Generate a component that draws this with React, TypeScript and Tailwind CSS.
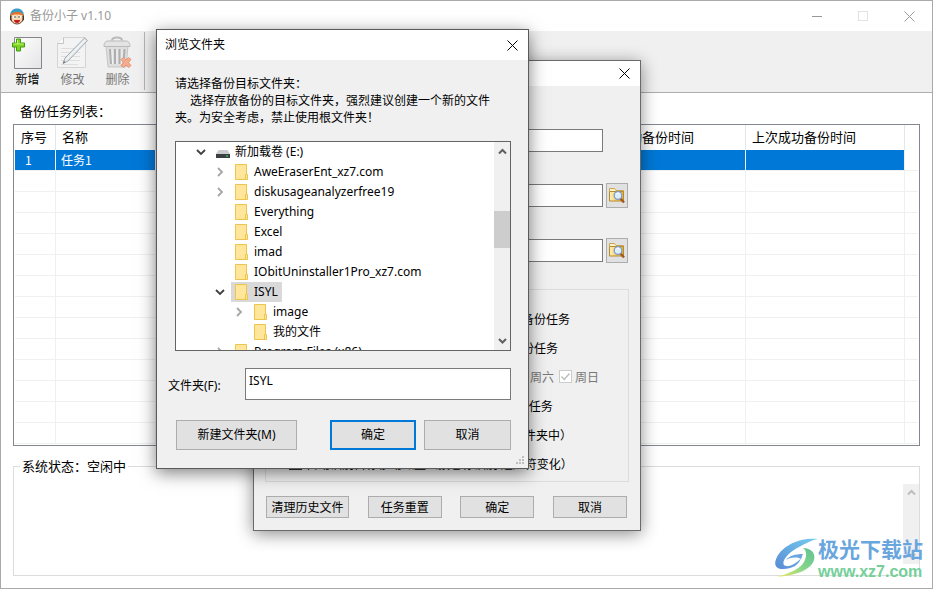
import { useState } from 'react'
import type { ReactNode } from 'react'

interface TreeNode {
  name: string
  level: number
  kind: 'drive' | 'folder'
  state?: 'open' | 'closed'
}

const TREE: TreeNode[] = [
  { name: '新加载卷 (E:)', level: 0, kind: 'drive', state: 'open' },
  { name: 'AweEraserEnt_xz7.com', level: 1, kind: 'folder', state: 'closed' },
  { name: 'diskusageanalyzerfree19', level: 1, kind: 'folder', state: 'closed' },
  { name: 'Everything', level: 1, kind: 'folder' },
  { name: 'Excel', level: 1, kind: 'folder' },
  { name: 'imad', level: 1, kind: 'folder' },
  { name: 'IObitUninstaller1Pro_xz7.com', level: 1, kind: 'folder' },
  { name: 'ISYL', level: 1, kind: 'folder', state: 'open' },
  { name: 'image', level: 2, kind: 'folder', state: 'closed' },
  { name: '我的文件', level: 2, kind: 'folder' },
  { name: 'Program Files (x86)', level: 1, kind: 'folder', state: 'closed' },
]

const INDENT = ['pl-5', 'pl-[39px]', 'pl-[58px]']

const WEEKDAYS = ['周一', '周二', '周三', '周四', '周五', '周六', '周日']

const EMPTY_ROWS = 13

function CloseIcon() {
  return (
    <svg width="11" height="11" viewBox="0 0 11 11" stroke="currentColor" fill="none">
      <path d="M.5 .5l10 10M10.5 .5l-10 10" />
    </svg>
  )
}

function Chevron({ open }: { open: boolean }) {
  return open ? (
    <svg width="10" height="10" viewBox="0 0 10 10" fill="none" stroke="#404040" strokeWidth="1.8">
      <path d="M1 3l4 4 4-4" />
    </svg>
  ) : (
    <svg width="10" height="10" viewBox="0 0 10 10" fill="none" stroke="#a6a6a6" strokeWidth="1.8">
      <path d="M3 1l4 4-4 4" />
    </svg>
  )
}

function ScrollArrow({ down = false, faded = false }: { down?: boolean; faded?: boolean }) {
  return (
    <svg
      width="9"
      height="9"
      viewBox="0 0 9 9"
      fill="none"
      stroke={faded ? '#bdbdbd' : '#606060'}
      strokeWidth="2"
    >
      <path d={down ? 'M1 3l3.500 3.500L8 3' : 'M1 6.500l3.500-3.500L8 6.500'} />
    </svg>
  )
}

function FolderIcon() {
  return (
    <svg width="16" height="16" viewBox="0 0 16 16">
      <path d="M.5 .5h11v10h1v5H.5z" fill="#ffe69a" stroke="#ecc64c" />
      <path d="M10.500 15v-4.500h1.500" fill="none" stroke="#ecc64c" />
    </svg>
  )
}

function DriveIcon() {
  return (
    <svg width="16" height="16" viewBox="0 0 16 16">
      <path d="M2.500 6h9L14 10H0z" fill="#c9cbce" />
      <path d="M0 10h14v4H0z" fill="#3c3f42" />
      <path d="M10 11.500h2v1h-2z" fill="#3df05c" />
    </svg>
  )
}

function BrowseIcon() {
  return (
    <svg width="17" height="17" viewBox="0 0 17 17">
      <defs>
        <linearGradient id="browseFolder" x1="0" y1="0" x2="1" y2="0">
          <stop offset="0" stopColor="#fdf0b8" />
          <stop offset="1" stopColor="#eeb22c" />
        </linearGradient>
      </defs>
      <path d="M.5 4V1.500h5L7 3.500h7.500V5" fill="#fdf3c4" stroke="#c9a55a" />
      <path d="M.5 4.500h14v9.500H.5z" fill="url(#browseFolder)" stroke="#b78a2c" />
      <path d="M11.500 11.500l3.500 4" stroke="#a4581f" strokeWidth="2.400" />
      <circle cx="9" cy="8.500" r="3.800" fill="#dcedfb" stroke="#7d9dc6" strokeWidth="1.300" />
      <path d="M7 7.500a2.500 2.500 0 0 1 3-1.200" stroke="#fff" fill="none" />
    </svg>
  )
}

function AppIcon() {
  return (
    <svg width="16" height="17" viewBox="0 0 16 17">
      <circle cx="8" cy="9.500" r="6.500" fill="#f8d7ae" stroke="#6a4226" />
      <path d="M1 8C1 3 4 .5 8 .5S15 3 15 8c-3-3-11-3-14 0z" fill="#3d9cc4" />
      <path d="M1 8c1-3 3-4 7-4s6 1 7 4c-3-2-11-2-14 0z" fill="#e8742a" />
      <path d="M1 7.500v4l1.500 2V8zM15 7.500v4l-1.500 2V8z" fill="#4a3020" />
      <circle cx="5.500" cy="9" r="1.500" fill="#fff" />
      <circle cx="10.500" cy="9" r="1.500" fill="#fff" />
      <circle cx="6" cy="9" r=".8" fill="#222" />
      <circle cx="10" cy="9" r=".8" fill="#222" />
      <path d="M5 12h6c0 4-6 4-6 0z" fill="#c8171e" />
    </svg>
  )
}

function AddIcon() {
  return (
    <svg width="32" height="34" viewBox="0 0 32 34">
      <defs>
        <linearGradient id="sheet" x1="0" y1="0" x2="1" y2="1">
          <stop offset="0" stopColor="#fff" />
          <stop offset="1" stopColor="#e4e4e6" />
        </linearGradient>
      </defs>
      <path d="M2.500 1.500h27v31h-27z" fill="url(#sheet)" stroke="#85858a" />
      <path d="M4.500 3v4H.5v4h4v4h4v-4h4V7h-4V3z" fill="#7fd321" stroke="#3f9d12" />
      <path d="M5.500 4v4h-4M5.500 8h6" stroke="#c3f27c" fill="none" />
    </svg>
  )
}

function EditIcon() {
  return (
    <svg width="32" height="34" viewBox="0 0 32 34">
      <path d="M6.500 1.500h22v30h-28V7.500z" fill="#f3f3f3" stroke="#d4d4d4" />
      <path d="M.5 7.500h6v-6" fill="#fafafa" stroke="#c6c6c6" />
      <path d="M4 12.500h19M4 16.500h19M4 20.500h19M4 24.500h19M4 28.500h17" stroke="#dedede" />
      <path d="M27.500 2l3 2.500L11 25l-5 2.500L8 22z" fill="#e3e8ea" stroke="#a3abb0" />
      <path d="M28 4L9.500 23.500" stroke="#fff" />
      <path d="M6 27.500l1-2.500 1.500 1.300z" fill="#5d676d" />
    </svg>
  )
}

function TrashIcon() {
  return (
    <svg width="32" height="34" viewBox="0 0 32 34">
      <path d="M4 10h22l-2 21H6z" fill="#dedede" stroke="#c6c6c6" />
      <path d="M10 4.500C10 2 12 1.500 15 1.500s5 .5 5 3" fill="none" stroke="#bababa" strokeWidth="2" />
      <path d="M2 9.500c0-3 2-4.500 4-4.500h18c2 0 4 1.500 4 4.500v1H2z" fill="#e4e4e4" stroke="#bababa" />
      <path d="M8 13l1 15M13 13v15M17.500 13v15M22.500 13l-1 15" stroke="#aeaeae" strokeWidth="2" />
      <path d="M10 13l.5 15M15 13v15M20 13l-.5 15" stroke="#f4f4f4" />
      <path
        d="M19 23.500l2.500-2 2.500 2.500 2.500-2.500 2.500 2-2.500 3 2.500 3-2.500 2-2.500-2.500-2.500 2.500-2.500-2 2.500-3z"
        fill="#f5ab8f"
        stroke="#e99374"
      />
    </svg>
  )
}

function ToolButton({ label, icon, disabled }: { label: string; icon: ReactNode; disabled?: boolean }) {
  return (
    <button
      type="button"
      disabled={disabled}
      className="flex w-[45px] flex-col items-center gap-px pt-[5px] text-xs leading-4 text-black disabled:text-[#777]"
    >
      {icon}
      {label}
    </button>
  )
}

function PushButton({ children, className }: { children: ReactNode; className: string }) {
  return (
    <button
      type="button"
      className={`flex items-center justify-center border-[#adadad] bg-[#e1e1e1] text-xs text-black ${className}`}
    >
      {children}
    </button>
  )
}

function TaskTable() {
  return (
    <div className="min-h-0 flex-1 overflow-hidden border border-[#828790] bg-white px-px">
      <table className="w-full table-fixed border-separate border-spacing-0 text-[13px] leading-5">
        <colgroup>
          <col className="w-[41px]" />
          <col className="w-[100px]" />
          <col />
          <col className="w-[162px]" />
          <col className="w-[159px]" />
          <col className="w-[13px]" />
        </colgroup>
        <thead>
          <tr className="h-[25px] text-left [&>th]:border-r [&>th]:border-[#e5e5e5] [&>th]:px-1.5 [&>th]:pb-0.5 [&>th]:font-normal [&>th]:whitespace-nowrap">
            <th>序号</th>
            <th>名称</th>
            <th>备份源</th>
            <th>下次启动备份时间</th>
            <th>上次成功备份时间</th>
            <th className="border-r-0!" />
          </tr>
        </thead>
        <tbody className="[&_td]:h-[21px] [&_td]:border-r [&_td]:border-b [&_td]:border-[#f0f0f0] [&_td:last-child]:border-r-0">
          <tr className="text-xs text-white [&>td]:bg-[#0078d7]">
            <td className="pl-2.5">1</td>
            <td className="pl-[5px]">任务1</td>
            <td />
            <td />
            <td />
            <td className="bg-white!" />
          </tr>
          {Array.from({ length: EMPTY_ROWS }, (_, i) => (
            <tr key={i}>
              <td />
              <td />
              <td />
              <td />
              <td />
              <td />
            </tr>
          ))}
        </tbody>
      </table>
    </div>
  )
}

function Watermark() {
  return (
    <div className="absolute right-[9px] bottom-2 flex items-center">
      <svg width="44" height="40" viewBox="0 0 44 40">
        <defs>
          <linearGradient id="wmBlue" x1="0" y1="1" x2="1" y2="0">
            <stop offset="0" stopColor="#5a8bd4" />
            <stop offset="1" stopColor="#74cdf0" />
          </linearGradient>
          <linearGradient id="wmGreen" x1="0" y1="1" x2="1" y2="0">
            <stop offset="0" stopColor="#f0ea5c" />
            <stop offset="0.500" stopColor="#86d58a" />
            <stop offset="1" stopColor="#5fc292" />
          </linearGradient>
        </defs>
        <path
          d="M44 1C27-1 9 7 3 19c-4 8-1 12 6 12 9 0 16-4 18-11-4 5-11 9-15 8-7-2 1-13 13-19C32 5 38 2 44 1z"
          fill="url(#wmBlue)"
        />
        <path d="M12 22c3-4 9-6 17-6-1 2-1 3-2 5-4-2-9-2-15 1z" fill="#6aa6e0" />
        <path
          d="M29 10c8 0 13 5 11 12-3 9-15 15-37 17 13-4 23-8 27-15 3-6 3-11-1-14z"
          fill="url(#wmGreen)"
        />
      </svg>
      <div className="flex flex-col gap-1 font-bold">
        <span className="text-[21px] leading-6 text-[#6aa6de]">极光下载站</span>
        <a href="#" className="font-['Liberation_Sans',sans-serif] text-base leading-4 text-[#74cf99]">
          www.xz7.com
        </a>
      </div>
    </div>
  )
}

function PathField({ label, browse }: { label: string; browse?: boolean }) {
  return (
    <div className="flex h-[25px] items-center gap-[3px]">
      <input aria-label={label} className="h-[23px] min-w-0 flex-1 border border-[#7a7a7a] bg-white px-1 text-xs" />
      {browse ? (
        <button
          type="button"
          aria-label={`选择${label}`}
          className="flex h-[25px] w-[22px] items-center justify-center border border-[#adadad] bg-[#e1e1e1]"
        >
          <BrowseIcon />
        </button>
      ) : (
        <span className="w-[22px]" />
      )}
    </div>
  )
}

function Option({ children }: { children: ReactNode }) {
  return (
    <label className="flex h-[29px] items-center gap-1 whitespace-nowrap">
      <input type="checkbox" className="size-[13px] shrink-0 appearance-none border border-[#333] bg-white" />
      {children}
    </label>
  )
}

function Weekday({ name }: { name: string }) {
  return (
    <label className="flex w-[45px] items-center gap-[3px] whitespace-nowrap text-[#777]">
      <span className="grid size-[13px] shrink-0 place-items-center">
        <input
          type="checkbox"
          disabled
          defaultChecked
          className="col-start-1 row-start-1 size-[13px] appearance-none border border-[#ccc] bg-white"
        />
        <svg width="11" height="11" viewBox="0 0 11 11" className="col-start-1 row-start-1">
          <path d="M1.500 5.500l2.700 3L9.500 2.500" fill="none" stroke="#bbb" strokeWidth="1.300" />
        </svg>
      </span>
      {name}
    </label>
  )
}

function TaskDialog() {
  return (
    <section className="absolute top-[59px] left-[252px] flex w-[388px] flex-col border border-[#6a6a6a] bg-[#f0f0f0] text-xs text-black shadow-[0_3px_16px_rgba(0,0,0,0.45)]">
      <header className="flex h-[25px] justify-end bg-white">
        <button type="button" aria-label="关闭" className="flex w-[31px] items-center justify-center">
          <CloseIcon />
        </button>
      </header>
      <div className="flex flex-col gap-[30px] pt-[42px] pr-3 pl-[90px]">
        <PathField label="任务名称" />
        <PathField label="备份源" browse />
        <PathField label="备份目标" browse />
      </div>
      <fieldset className="mx-[11px] mt-[26px] h-[193px] border border-[#dcdcdc] pt-[14px] pl-[23px]">
        <Option>电脑启动后如果已超过计划时间立即启动备份任务</Option>
        <Option>在每天指定的时间到达后自动启动一次备份任务</Option>
        <div className="flex h-[29px] items-center">
          {WEEKDAYS.map((day) => (
            <Weekday key={day} name={day} />
          ))}
        </div>
        <Option>在每次插入目标移动磁盘5分钟后启动备份任务</Option>
        <Option>保留历史备份文件（存放在目标 bak 的文件夹中）</Option>
        <Option>自动识别目标移动磁盘（按卷标识别 适应符变化）</Option>
      </fieldset>
      <footer className="flex justify-between pt-[14px] pr-[13px] pb-3 pl-3">
        <PushButton className="h-[22px] w-[83px] border">清理历史文件</PushButton>
        <PushButton className="h-[22px] w-[74px] border">任务重置</PushButton>
        <PushButton className="h-[22px] w-[74px] border">确定</PushButton>
        <PushButton className="h-[22px] w-[74px] border">取消</PushButton>
      </footer>
    </section>
  )
}

function FolderTree({ selected, onSelect }: { selected: string; onSelect: (name: string) => void }) {
  return (
    <div className="flex h-[210px] border border-[#646464] bg-white">
      <ul className="min-w-0 flex-1 overflow-hidden">
        {TREE.map((node) => (
          <li key={node.name} className={`flex h-5 items-center ${INDENT[node.level]}`}>
            <span className="mr-1.5 w-[10px] shrink-0">
              {node.state && <Chevron open={node.state === 'open'} />}
            </span>
            <button
              type="button"
              onClick={() => onSelect(node.name)}
              className={`flex h-5 items-center gap-[3px] px-1 whitespace-nowrap ${
                node.name === selected ? 'bg-[#d9d9d9]' : ''
              }`}
            >
              {node.kind === 'drive' ? <DriveIcon /> : <FolderIcon />}
              {node.name}
            </button>
          </li>
        ))}
      </ul>
      <div className="flex w-4 flex-col items-center bg-[#f0f0f0] py-[5px]">
        <ScrollArrow />
        <div className="mt-[55px] h-[37px] w-full bg-[#cdcdcd]" />
        <span className="mt-auto flex">
          <ScrollArrow down />
        </span>
      </div>
    </div>
  )
}

function BrowseDialog() {
  const [folder, setFolder] = useState('ISYL')

  return (
    <section className="absolute top-7 left-[155px] flex w-[373px] flex-col border border-[#5a5a5a] bg-[#f0f0f0] font-['Noto_Sans','Noto_Sans_CJK_SC',sans-serif] text-xs text-black shadow-[0_4px_16px_rgba(0,0,0,0.5)]">
      <header className="flex h-[30px] items-center justify-between bg-white pl-2">
        <h2>浏览文件夹</h2>
        <button type="button" aria-label="关闭" className="flex h-full w-[31px] items-center justify-center">
          <CloseIcon />
        </button>
      </header>
      <div className="pt-[15px] pr-[17px] pl-[18px]">
        <p className="leading-[17px]">请选择备份目标文件夹：</p>
        <p className="mb-[15px] indent-[15px] leading-[17px]">
          选择存放备份的目标文件夹，强烈建议创建一个新的文件夹。为安全考虑，禁止使用根文件夹！
        </p>
        <FolderTree selected={folder} onSelect={setFolder} />
      </div>
      <label className="mt-[17px] flex items-center pr-[17px] pl-[11px]">
        <span className="w-[77px] pt-1">文件夹(F):</span>
        <input
          value={folder}
          onChange={(e) => setFolder(e.target.value)}
          className="h-8 min-w-0 flex-1 border border-[#7a7a7a] bg-white px-[3px] pb-2"
        />
      </label>
      <footer className="mt-5 mb-[18px] flex gap-2 pr-[17px] pl-[19px]">
        <PushButton className="mr-auto h-[30px] w-[121px] border">新建文件夹(M)</PushButton>
        <PushButton className="h-[30px] w-[86px] border-2 border-[#0078d7]!">确定</PushButton>
        <PushButton className="h-[30px] w-[87px] border">取消</PushButton>
      </footer>
      <svg width="10" height="10" viewBox="0 0 10 10" fill="#bfbfbf" className="absolute right-0.5 bottom-0.5">
        <path d="M6 0h2v2H6zM3 3h2v2H3zM6 3h2v2H6zM0 6h2v2H0zM3 6h2v2H3zM6 6h2v2H6z" />
      </svg>
    </section>
  )
}

export default function App() {
  return (
    <div className="relative flex h-screen flex-col overflow-hidden border border-[#aaa] bg-white font-['Noto_Sans_CJK_SC',sans-serif] text-black">
      <header className="flex h-[30px] shrink-0 items-center pl-2 text-xs text-[#999]">
        <AppIcon />
        <h1 className="ml-[5px] flex-1 font-['Noto_Sans','Noto_Sans_CJK_SC',sans-serif]">备份小子 v1.10</h1>
        <button type="button" aria-label="最小化" className="flex h-full w-[46px] items-center justify-center">
          <span className="h-px w-[10px] bg-[#999]" />
        </button>
        <button type="button" aria-label="最大化" className="flex h-full w-[46px] items-center justify-center">
          <span className="size-[10px] border border-[#e3e3e3]" />
        </button>
        <button type="button" aria-label="关闭" className="flex h-full w-[46px] items-center justify-center">
          <CloseIcon />
        </button>
      </header>
      <nav className="flex h-[62px] shrink-0 border-b border-[#adadad] bg-[#f0f0f0] pl-1">
        <ToolButton label="新增" icon={<AddIcon />} />
        <ToolButton label="修改" icon={<EditIcon />} disabled />
        <ToolButton label="删除" icon={<TrashIcon />} disabled />
        <span className="mt-px ml-1 h-[58px] w-px bg-[#b4b4b4]" />
      </nav>
      <main className="flex min-h-0 flex-1 flex-col px-3 pb-3 text-[13px]">
        <h2 className="mt-2 mb-[3px] pl-[7px] leading-5">备份任务列表：</h2>
        <TaskTable />
        <fieldset className="mt-[10px] h-[120px] shrink-0 border border-[#dcdcdc] pl-1.5">
          <legend className="px-0.5 leading-5">系统状态：空闲中</legend>
          <div className="mt-2 ml-auto flex h-20 w-4 flex-col items-center justify-between bg-[#f0f0f0] py-1">
            <ScrollArrow faded />
            <ScrollArrow down faded />
          </div>
        </fieldset>
      </main>
      <TaskDialog />
      <BrowseDialog />
      <Watermark />
    </div>
  )
}
